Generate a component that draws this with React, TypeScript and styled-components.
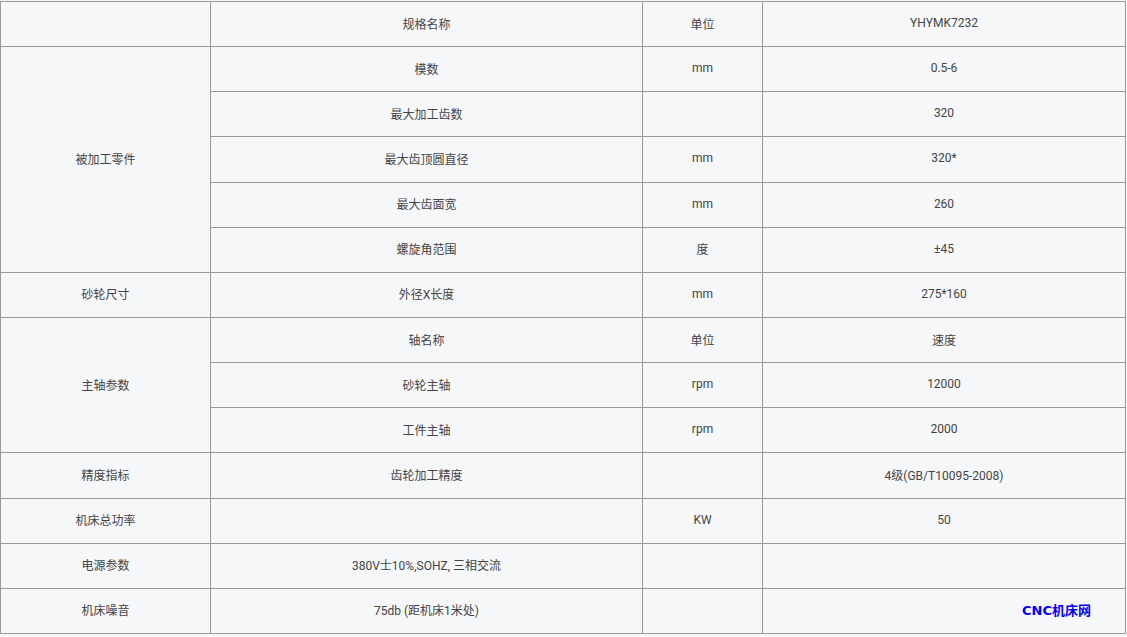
import styled, { createGlobalStyle } from "styled-components";

const GlobalStyle = createGlobalStyle`
  body {
    margin: 0;
    background: #f6f7f9;
    font-family: Roboto, "Noto Sans CJK SC", sans-serif;
  }
`;

const Wrap = styled.div`
  position: relative;
  padding-top: 1px;
`;

const Table = styled.table`
  width: 1125px;
  height: 633px;
  border-collapse: collapse;
  table-layout: fixed;
  background: #f6f7f9;
  font-size: 12px;
  color: #444;
`;

const Cell = styled.td`
  border: 1px solid #9a9a9a;
  padding: 0 0 2px;
  text-align: center;
  vertical-align: middle;
`;

const Watermark = styled.span`
  position: absolute;
  left: 1022px;
  top: 600px;
  font-family: "DejaVu Sans", "Noto Sans CJK SC", sans-serif;
  font-weight: 700;
  font-size: 13px;
  color: #0000ff;
`;

export default function App() {
  return (
    <Wrap>
      <GlobalStyle />
      <Table>
        <colgroup>
          <col style={{ width: 210 }} />
          <col style={{ width: 432 }} />
          <col style={{ width: 120 }} />
          <col style={{ width: 363 }} />
        </colgroup>
        <tbody>
          <tr>
            <Cell />
            <Cell>规格名称</Cell>
            <Cell>单位</Cell>
            <Cell>YHYMK7232</Cell>
          </tr>
          <tr>
            <Cell rowSpan={5}>被加工零件</Cell>
            <Cell>模数</Cell>
            <Cell>mm</Cell>
            <Cell>0.5-6</Cell>
          </tr>
          <tr>
            <Cell>最大加工齿数</Cell>
            <Cell />
            <Cell>320</Cell>
          </tr>
          <tr>
            <Cell>最大齿顶圆直径</Cell>
            <Cell>mm</Cell>
            <Cell>320*</Cell>
          </tr>
          <tr>
            <Cell>最大齿面宽</Cell>
            <Cell>mm</Cell>
            <Cell>260</Cell>
          </tr>
          <tr>
            <Cell>螺旋角范围</Cell>
            <Cell>度</Cell>
            <Cell>±45</Cell>
          </tr>
          <tr>
            <Cell>砂轮尺寸</Cell>
            <Cell>外径X长度</Cell>
            <Cell>mm</Cell>
            <Cell>275*160</Cell>
          </tr>
          <tr>
            <Cell rowSpan={3}>主轴参数</Cell>
            <Cell>轴名称</Cell>
            <Cell>单位</Cell>
            <Cell>速度</Cell>
          </tr>
          <tr>
            <Cell>砂轮主轴</Cell>
            <Cell>rpm</Cell>
            <Cell>12000</Cell>
          </tr>
          <tr>
            <Cell>工件主轴</Cell>
            <Cell>rpm</Cell>
            <Cell>2000</Cell>
          </tr>
          <tr>
            <Cell>精度指标</Cell>
            <Cell>齿轮加工精度</Cell>
            <Cell />
            <Cell>4级(GB/T10095-2008)</Cell>
          </tr>
          <tr>
            <Cell>机床总功率</Cell>
            <Cell />
            <Cell>KW</Cell>
            <Cell>50</Cell>
          </tr>
          <tr>
            <Cell>电源参数</Cell>
            <Cell>380V士10%,SOHZ, 三相交流</Cell>
            <Cell />
            <Cell />
          </tr>
          <tr>
            <Cell>机床噪音</Cell>
            <Cell>75db (距机床1米处)</Cell>
            <Cell />
            <Cell />
          </tr>
        </tbody>
      </Table>
      <Watermark>CNC机床网</Watermark>
    </Wrap>
  );
}
